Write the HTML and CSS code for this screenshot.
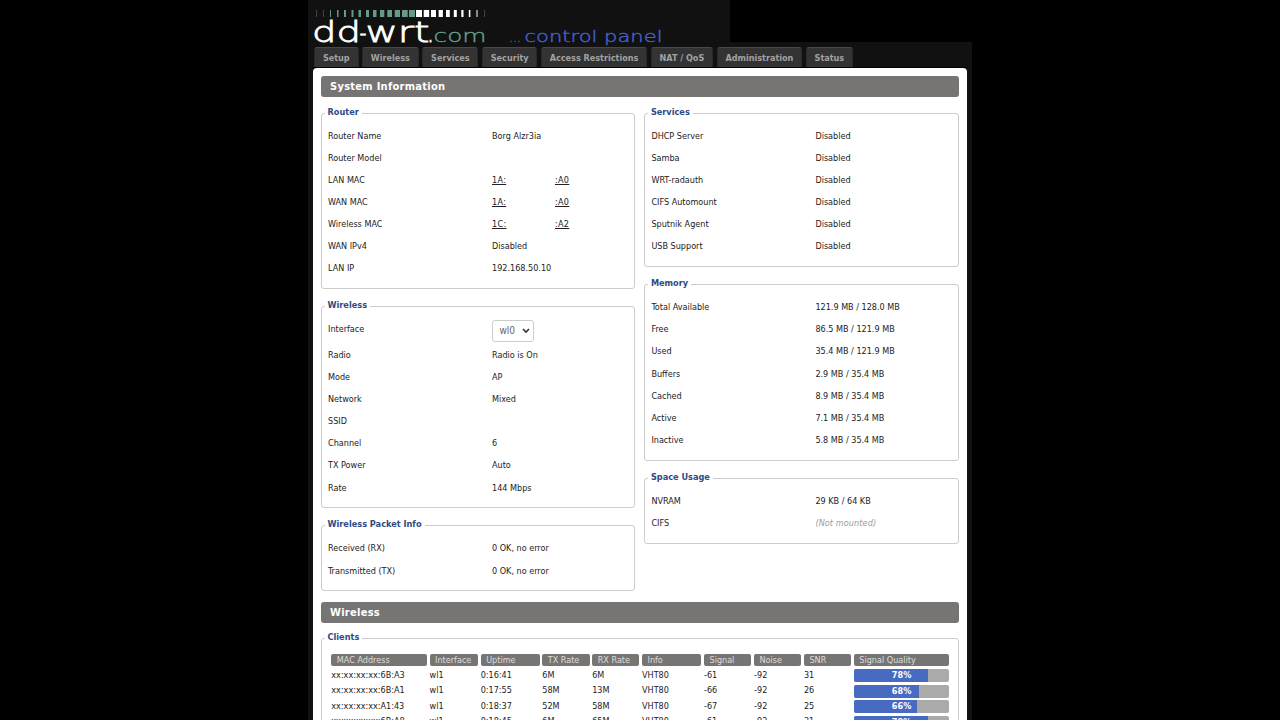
FILE: index.html
```html
<!DOCTYPE html>
<html lang="en">
<head>
    <meta charset="UTF-8">
    <meta name="viewport" content="width=device-width, initial-scale=1.0">
    <title>DD-WRT Control Panel</title>
    <link rel="stylesheet" href="styles.css">
</head>
<body>
    <div class="wrapper">
        <header class="logo">
            <svg width="422" height="46" viewBox="0 0 422 46">
                <g class="bars-dim">
                    <rect x="8" y="10" width="1" height="7"/>
                    <rect x="15" y="10" width="1" height="7"/>
                    <rect x="176" y="10" width="1" height="7"/>
                </g>
                <g class="bars-teal">
                    <rect x="22" y="10" width="1" height="7"/>
                    <rect x="29" y="10" width="1.5" height="7"/>
                    <rect x="36" y="10" width="2" height="7"/>
                    <rect x="43.5" y="10" width="2" height="7"/>
                    <rect x="50.5" y="10" width="2.5" height="7"/>
                    <rect x="58" y="10" width="3" height="7"/>
                    <rect x="65" y="10" width="3.5" height="7"/>
                    <rect x="72" y="10" width="4.3" height="7"/>
                    <rect x="79.3" y="10" width="4.7" height="7"/>
                    <rect x="86.7" y="10" width="5.3" height="7"/>
                    <rect x="94" y="10" width="5.7" height="7"/>
                    <rect x="101" y="10" width="6" height="7"/>
                </g>
                <g class="bars-white">
                    <rect x="108" y="10" width="6" height="7"/>
                    <rect x="115.7" y="10" width="5.5" height="7"/>
                    <rect x="123" y="10" width="5" height="7"/>
                    <rect x="130.6" y="10" width="4.3" height="7"/>
                    <rect x="138" y="10" width="3.8" height="7"/>
                    <rect x="145.8" y="10" width="3" height="7"/>
                    <rect x="153.3" y="10" width="2.2" height="7"/>
                    <rect x="160.8" y="10" width="1.6" height="7"/>
                    <rect x="168.5" y="10" width="1" height="7"/>
                </g>
                <text class="logo-name" x="4" y="41.5" textLength="49" lengthAdjust="spacingAndGlyphs">dd</text>
                <text class="logo-name" x="51.5" y="41.5" textLength="7" lengthAdjust="spacingAndGlyphs">-</text>
                <text class="logo-name" x="57.5" y="41.5" textLength="64" lengthAdjust="spacingAndGlyphs">wrt</text>
                <text class="logo-name" x="119" y="41.5" textLength="7" lengthAdjust="spacingAndGlyphs">.</text>
                <text class="logo-com" x="125.5" y="41.5" textLength="53" lengthAdjust="spacingAndGlyphs">com</text>
                <text class="logo-panel" x="201" y="42" textLength="12" lengthAdjust="spacingAndGlyphs">...</text>
                <text class="logo-panel" x="216.5" y="42" textLength="138" lengthAdjust="spacingAndGlyphs">control panel</text>
            </svg>
        </header>
        <div class="main">
            <nav class="menu">
                <a>Setup</a>
                <a>Wireless</a>
                <a>Services</a>
                <a>Security</a>
                <a>Access Restrictions</a>
                <a>NAT / QoS</a>
                <a>Administration</a>
                <a>Status</a>
            </nav>
            <div class="contents">
                <h2>System Information</h2>
                <div class="columns">
                    <div class="column">
                        <fieldset>
                            <legend>Router</legend>
                            <div class="setting"><div class="label">Router Name</div>Borg Alzr3ia</div>
                            <div class="setting"><div class="label">Router Model</div></div>
                            <div class="setting"><div class="label">LAN MAC</div><span class="mac">1A:</span><span class="mac mac-end">:A0</span></div>
                            <div class="setting"><div class="label">WAN MAC</div><span class="mac">1A:</span><span class="mac mac-end">:A0</span></div>
                            <div class="setting"><div class="label">Wireless MAC</div><span class="mac">1C:</span><span class="mac mac-end">:A2</span></div>
                            <div class="setting"><div class="label">WAN IPv4</div>Disabled</div>
                            <div class="setting"><div class="label">LAN IP</div>192.168.50.10</div>
                        </fieldset>
                        <fieldset>
                            <legend>Wireless</legend>
                            <div class="setting interface">
                                <div class="label">Interface</div>
                                <div class="select">wl0
                                    <svg width="8" height="6" viewBox="0 0 8 6"><path d="M1 1l3 3 3-3"/></svg>
                                </div>
                            </div>
                            <div class="setting"><div class="label">Radio</div>Radio is On</div>
                            <div class="setting"><div class="label">Mode</div>AP</div>
                            <div class="setting"><div class="label">Network</div>Mixed</div>
                            <div class="setting"><div class="label">SSID</div></div>
                            <div class="setting"><div class="label">Channel</div>6</div>
                            <div class="setting"><div class="label">TX Power</div>Auto</div>
                            <div class="setting"><div class="label">Rate</div>144 Mbps</div>
                        </fieldset>
                        <fieldset>
                            <legend>Wireless Packet Info</legend>
                            <div class="setting"><div class="label">Received (RX)</div>0 OK, no error</div>
                            <div class="setting"><div class="label">Transmitted (TX)</div>0 OK, no error</div>
                        </fieldset>
                    </div>
                    <div class="column">
                        <fieldset>
                            <legend>Services</legend>
                            <div class="setting"><div class="label">DHCP Server</div>Disabled</div>
                            <div class="setting"><div class="label">Samba</div>Disabled</div>
                            <div class="setting"><div class="label">WRT-radauth</div>Disabled</div>
                            <div class="setting"><div class="label">CIFS Automount</div>Disabled</div>
                            <div class="setting"><div class="label">Sputnik Agent</div>Disabled</div>
                            <div class="setting"><div class="label">USB Support</div>Disabled</div>
                        </fieldset>
                        <fieldset>
                            <legend>Memory</legend>
                            <div class="setting"><div class="label">Total Available</div>121.9 MB / 128.0 MB</div>
                            <div class="setting"><div class="label">Free</div>86.5 MB / 121.9 MB</div>
                            <div class="setting"><div class="label">Used</div>35.4 MB / 121.9 MB</div>
                            <div class="setting"><div class="label">Buffers</div>2.9 MB / 35.4 MB</div>
                            <div class="setting"><div class="label">Cached</div>8.9 MB / 35.4 MB</div>
                            <div class="setting"><div class="label">Active</div>7.1 MB / 35.4 MB</div>
                            <div class="setting"><div class="label">Inactive</div>5.8 MB / 35.4 MB</div>
                        </fieldset>
                        <fieldset>
                            <legend>Space Usage</legend>
                            <div class="setting"><div class="label">NVRAM</div>29 KB / 64 KB</div>
                            <div class="setting"><div class="label">CIFS</div><em>(Not mounted)</em></div>
                        </fieldset>
                    </div>
                </div>
                <h2>Wireless</h2>
                <fieldset class="clients">
                    <legend>Clients</legend>
                    <div class="table">
                        <div class="row head">
                            <span>MAC Address</span><span>Interface</span><span>Uptime</span><span>TX Rate</span><span>RX Rate</span><span>Info</span><span>Signal</span><span>Noise</span><span>SNR</span><span>Signal Quality</span>
                        </div>
                        <div class="row">
                            <span>xx:xx:xx:xx:6B:A3</span><span>wl1</span><span>0:16:41</span><span>6M</span><span>6M</span><span>VHT80</span><span>-61</span><span>-92</span><span>31</span>
                            <div class="meter"><div class="bar" style="width: 78%"></div><b>78%</b></div>
                        </div>
                        <div class="row">
                            <span>xx:xx:xx:xx:6B:A1</span><span>wl1</span><span>0:17:55</span><span>58M</span><span>13M</span><span>VHT80</span><span>-66</span><span>-92</span><span>26</span>
                            <div class="meter"><div class="bar" style="width: 68%"></div><b>68%</b></div>
                        </div>
                        <div class="row">
                            <span>xx:xx:xx:xx:A1:43</span><span>wl1</span><span>0:18:37</span><span>52M</span><span>58M</span><span>VHT80</span><span>-67</span><span>-92</span><span>25</span>
                            <div class="meter"><div class="bar" style="width: 66%"></div><b>66%</b></div>
                        </div>
                        <div class="row">
                            <span>xx:xx:xx:xx:6B:A8</span><span>wl1</span><span>0:18:45</span><span>6M</span><span>65M</span><span>VHT80</span><span>-61</span><span>-92</span><span>31</span>
                            <div class="meter"><div class="bar" style="width: 78%"></div><b>78%</b></div>
                        </div>
                    </div>
                </fieldset>
            </div>
        </div>
    </div>
</body>
</html>
```
FILE: styles.css
```css
* {
    box-sizing: border-box;
}

body {
    margin: 0;
    height: 720px;
    overflow: hidden;
    background: #000;
    color: #222;
    font: 9px "DejaVu Sans Condensed", "DejaVu Sans", sans-serif;
    font-stretch: condensed;
}

.wrapper {
    width: 664px;
    margin-left: 308px;
}

.logo {
    width: 422px;
    height: 42px;
    background: #111;
}

.logo svg {
    display: block;
    overflow: visible;
    position: relative;
    z-index: 1;
}

.logo text {
    font-family: "DejaVu Sans Light", "DejaVu Sans", sans-serif;
    font-weight: 200;
    font-stretch: normal;
}

.bars-dim {
    fill: #444;
}

.bars-teal {
    fill: #65998a;
}

.bars-white {
    fill: #fff;
}

.logo-name {
    font-size: 29px;
    fill: #fff;
    stroke: #fff;
    stroke-width: 0.8;
}

.logo-com {
    font-size: 18px;
    fill: #65a48f;
    stroke: #65a48f;
    stroke-width: 0.3;
}

.logo-panel {
    font-size: 16.5px;
    fill: #4560d0;
    stroke: #4560d0;
    stroke-width: 0.4;
}

.main {
    height: 678px;
    padding: 5px 5px 0;
    background: #111;
}

.menu {
    display: flex;
    gap: 3.4px;
    height: 21px;
    padding-left: 1px;
    border-bottom: 1px solid #000;
}

.menu a {
    padding: 0 7.9px;
    border: 1px solid #292929;
    border-top-color: #484848;
    border-bottom: none;
    border-radius: 3px 3px 0 0;
    background: #333;
    color: #a2a2a2;
    font-size: 9px;
    font-weight: bold;
    line-height: 21px;
    white-space: nowrap;
}

.contents {
    height: 660px;
    padding: 8px 8px 0;
    border-radius: 4px 4px 0 0;
    background: #fff;
}

h2 {
    margin: 0;
    height: 21px;
    padding-left: 9px;
    border-radius: 3px;
    background: #777573;
    color: #fff;
    font-size: 11px;
    letter-spacing: 0.28px;
    line-height: 21px;
}

.columns {
    display: grid;
    grid-template-columns: 314px 314.6px;
    gap: 9.4px;
    height: 505px;
    padding-top: 9.5px;
}

fieldset {
    margin: 0 0 11px;
    padding: 5px 6px 8.7px;
    border: 1px solid #ccc;
    border-radius: 3px;
}

legend {
    margin-left: -3.5px;
    padding: 0 3px 2px;
    color: #2f4a85;
    font-size: 9.1px;
    font-weight: bold;
    line-height: 11px;
}

.setting {
    display: flex;
    height: 22.17px;
    line-height: 22px;
}

.label {
    flex: none;
    width: 164px;
}

.mac {
    width: 15px;
    overflow: hidden;
    text-decoration: underline;
    letter-spacing: 0.3px;
}

.mac-end {
    margin-left: 48px;
}

.interface {
    height: 25.3px;
}

.select {
    display: flex;
    align-items: center;
    justify-content: space-between;
    width: 42px;
    height: 22px;
    margin-top: 2px;
    padding: 0 3.5px 0 6.5px;
    border: 1px solid #ccc;
    border-radius: 3px;
    color: #666;
    font-size: 10px;
}

.select path {
    fill: none;
    stroke: #333;
    stroke-width: 1.6;
}

em {
    color: #999;
    letter-spacing: 0.1px;
}

.clients {
    height: 120px;
    margin-top: 8.7px;
    padding: 9.4px 8px 0 9.3px;
}

.clients legend {
    margin-left: -6.8px;
}

.row {
    display: grid;
    grid-template-columns: 95.6px 48.4px 58.9px 47.3px 47.1px 59.3px 47.4px 47.2px 47.2px 95.5px;
    gap: 2.7px;
    height: 15.5px;
    line-height: 15.6px;
    white-space: nowrap;
}

.head {
    height: 13.8px;
    line-height: 12px;
}

.head span {
    height: 12px;
    padding-left: 5.5px;
    border-radius: 2px;
    background: #777573;
    color: #ddd;
}

.meter {
    display: grid;
    height: 13px;
    margin-top: 1.3px;
    border-radius: 2px;
    overflow: hidden;
    background: #aaa;
    line-height: 13px;
}

.meter .bar,
.meter b {
    grid-area: 1 / 1;
}

.meter .bar {
    background: #466bc0;
}

.meter b {
    color: #fff;
    text-align: center;
}
```
